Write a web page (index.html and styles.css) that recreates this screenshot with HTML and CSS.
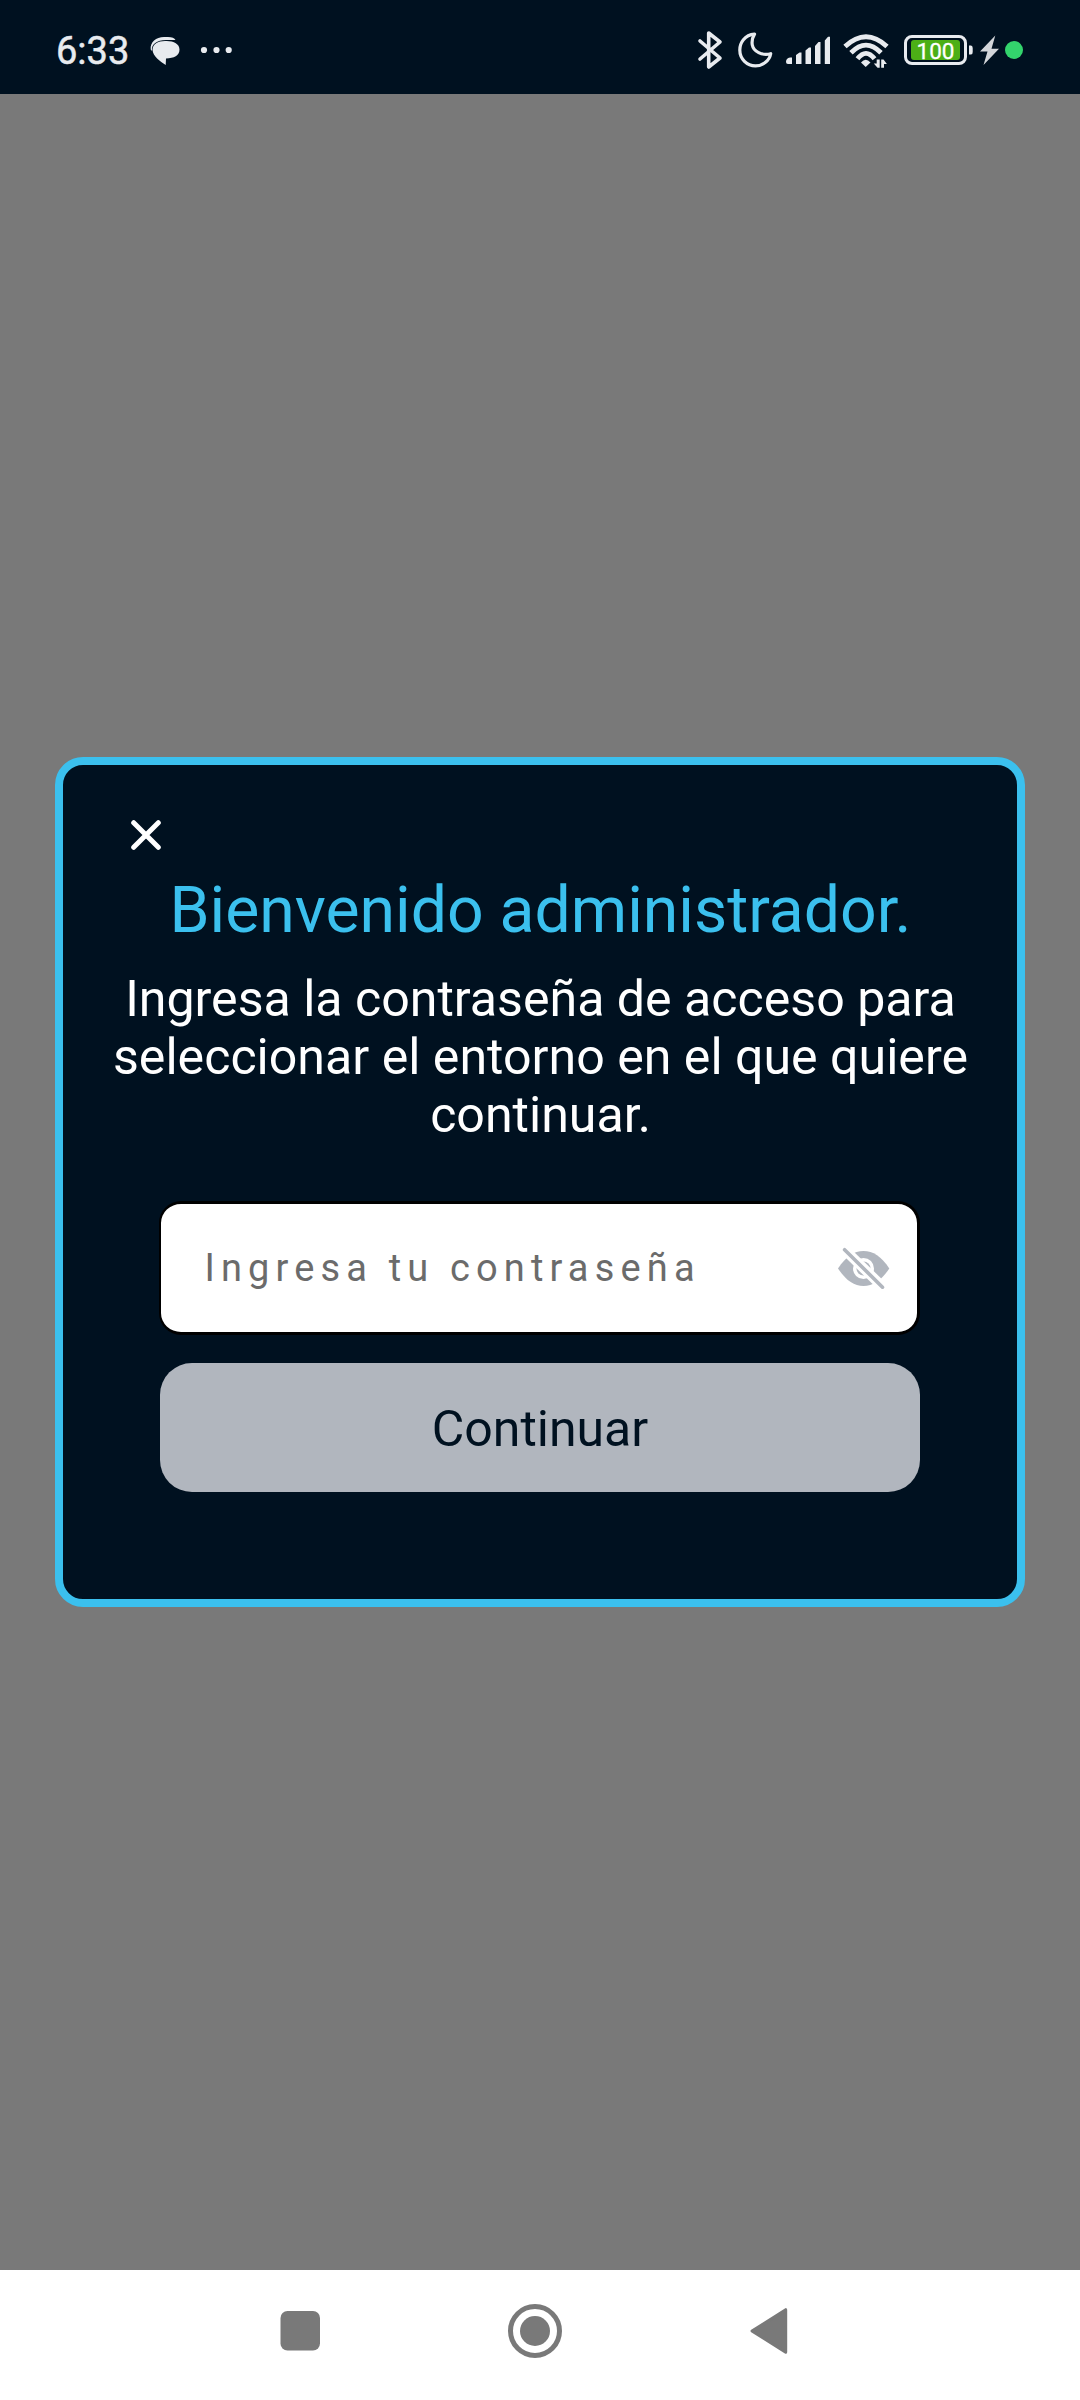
FILE: index.html
```html
<!DOCTYPE html>
<html lang="es">
<head>
<meta charset="utf-8">
<title>Acceso de administrador</title>
<link rel="stylesheet" href="styles.css">
</head>
<body>
<header class="status-bar">
  <div class="status-group">
    <span class="clock">6:33</span>
    <svg class="status-icons" viewBox="147 24 88 52" width="88" height="52">
      <path class="fill" d="M150.700 49.500 C150 42 156 37 164 37 H168 C172 37 174.500 38 175.500 40 H166 C157 40 151 44 152 51Z"/>
      <path class="fill" d="M165 41 C173 40.500 179.500 43.500 179.500 49.500 C179.500 56 174 58 166 58.500 L165.700 65 C160 61.500 153 56 152.500 50 C152.500 44 158 41 165 41Z"/>
      <circle class="fill" cx="204" cy="50" r="3.100"/><circle class="fill" cx="216.500" cy="50" r="3.100"/><circle class="fill" cx="228.700" cy="50" r="3.100"/>
    </svg>
  </div>
  <div class="status-group">
    <svg class="status-icons" viewBox="690 24 203 52" width="203" height="52">
      <path class="stroke" d="M700 41 L720 58 L708.700 67 V33 L720 42 L700 59"/>
      <path class="stroke moon" d="M754.500 34.200 C744.500 35 739.800 43 739.800 50 C739.800 59 747 65.800 755.500 65.800 C763 65.800 769.500 60.500 770.700 53.700 C762 56 753.500 51.500 752.300 45 C751.600 41 752.500 37.500 754.500 34.200Z"/>
      <path class="fill" d="M786 62 Q786 58 790 57.500 H792 V64 H788 Q786 64 786 62Z M796 64 V55 L799.500 52.500 H801.500 V64Z M805.500 64 V50.500 L809 47.500 H811 V64Z M815 64 V46 L818.500 42 H820.500 V64Z M824.800 64 V40.500 L828 36.700 H830 V64Z"/>
      <path class="stroke wifi" d="M845 46.500 Q866 27 887 46.500 M851 52.800 Q866 37.500 881 52.800 M857.500 58.800 Q866 47.800 874.500 58.800"/>
      <path class="fill" d="M865.700 67 L861 62.500 Q865.700 57 870.500 62.500Z"/>
      <path class="gap" d="M874 63 L878 60 H881 L887 62 V65 H884.800 V68.500 H878 L874 63Z"/>
      <path class="fill" d="M876.700 59.500 H879.700 V67.700 H877.500 L873.800 63.500 H876.700Z M884 67.700 H881.200 V59.500 H883.500 L886.900 64 H884Z"/>
    </svg>
    <div class="battery"><span class="level">100</span></div>
    <svg class="status-icons" viewBox="967 24 60 52" width="60" height="52">
      <path class="fill" d="M969 45.500 H971 Q972.700 45.500 972.700 48 V52 Q972.700 54.500 971 54.500 H969Z"/>
      <path class="bolt" d="M995.300 35.500 L980 51.500 H987.500 L983.500 65 L999 48.700 H991.500Z"/>
      <circle class="dot" cx="1014" cy="50" r="9"/>
    </svg>
  </div>
</header>
<main class="screen">
  <section class="dialog">
    <button class="close" aria-label="Cerrar"><svg viewBox="0 0 30 30" width="30" height="30"><path d="M2.700 2.700 L27.300 27.300 M27.300 2.700 L2.700 27.300"/></svg></button>
    <h1 class="title">Bienvenido administrador.</h1>
    <p class="message">Ingresa la contraseña de acceso para<br>seleccionar el entorno en el que quiere<br>continuar.</p>
    <div class="field">
      <span class="placeholder">Ingresa tu contraseña</span>
      <svg class="eye" viewBox="837 1246 54 44" width="54" height="44">
        <path class="eye-gray" d="M838 1268.500 C846 1256.500 854 1251 863.500 1251 C873 1251 881.500 1256.500 889.300 1268.500 C881.500 1280.500 873 1286 863.500 1286 C854 1286 846 1280.500 838 1268.500Z"/>
        <circle class="eye-white" cx="863.500" cy="1268.500" r="10.500"/>
        <circle class="eye-gray" cx="863.500" cy="1268.500" r="7"/>
        <circle class="eye-white" cx="863.500" cy="1268.500" r="4.200"/>
        <path class="slash-gap" d="M840 1245.300 L887.500 1291.500"/>
        <path class="slash" d="M844.600 1249.700 L882.500 1287.200"/>
      </svg>
    </div>
    <button class="submit">Continuar</button>
  </section>
</main>
<nav class="nav-bar">
  <svg viewBox="275 2300 520 62" width="520" height="62">
    <rect x="280.500" y="2311" width="39.500" height="39.500" rx="7"/>
    <circle class="ring" cx="535" cy="2331" r="24.500"/>
    <circle cx="535" cy="2331" r="15"/>
    <path class="back" d="M785.700 2309.700 V2352.300 L752 2331Z"/>
  </svg>
</nav>
</body>
</html>
```
FILE: styles.css
```css
* { box-sizing: border-box; }

body {
  margin: 0;
  height: 2400px;
  display: flex;
  flex-direction: column;
  background: #797979;
  font-family: Roboto, sans-serif;
}

button {
  border: 0;
  padding: 0;
  font-family: inherit;
}

svg { display: block; flex: none; }

/* Status bar */
.status-bar {
  height: 94px;
  padding: 24px 53px 18px 56px;
  display: flex;
  justify-content: space-between;
  background: #001120;
}

.status-group {
  display: flex;
  height: 52px;
}

.clock {
  width: 91px;
  color: #e8ebef;
  font-size: 38px;
  line-height: 54px;
  -webkit-text-stroke: 0.500px #e8ebef;
}

.fill { fill: #e8ebef; }

.stroke {
  fill: none;
  stroke: #e8ebef;
  stroke-width: 3.600;
  stroke-linecap: round;
  stroke-linejoin: round;
}

.moon { stroke-width: 3.200; }
.wifi { stroke-width: 4.800; stroke-linecap: butt; }
.gap { fill: #001120; stroke: #001120; stroke-width: 2; }
.bolt { fill: #d3d6da; }
.dot { fill: #33d46c; }

.battery {
  width: 63px;
  height: 30px;
  margin: 11px 0 0 11px;
  padding: 2px 4px;
  border: 3px solid #e8ebef;
  border-radius: 8px;
}

.level {
  display: block;
  height: 20px;
  border-radius: 3px;
  background: #4caf16;
  color: #fff;
  font-size: 22.500px;
  line-height: 22px;
  text-align: center;
  -webkit-text-stroke: 0.300px #fff;
}

/* Dialog */
.screen {
  flex: 1;
  padding: 663px 55px 0;
}

.dialog {
  height: 850px;
  padding: 55px 40px 0;
  display: flex;
  flex-direction: column;
  border: 8px solid #3bc0ee;
  border-radius: 28px;
  background: #001120;
  text-align: center;
}

.close {
  width: 30px;
  height: 30px;
  margin-left: 27.500px;
  background: none;
}

.close path {
  stroke: #fff;
  stroke-width: 5;
  stroke-linecap: round;
}

.title {
  margin: 22px 0 0;
  padding-left: 1px;
  color: #3bc0ee;
  font-size: 64.3px;
  font-weight: 400;
  line-height: 76px;
}

.message {
  margin: 22px 0 0;
  padding-left: 1px;
  color: #fff;
  font-size: 50.1px;
  line-height: 58px;
}

.field {
  width: 761px;
  height: 134px;
  margin: 57px 0 0 56px;
  padding: 0 26px 0 43.500px;
  display: flex;
  align-items: center;
  justify-content: space-between;
  border: 3px solid #000;
  border-left-width: 2px;
  border-radius: 22px;
  background: #fff;
}

.placeholder {
  color: #6b6b6b;
  font-size: 38px;
  letter-spacing: 6.150px;
}

.eye-gray { fill: #b1b6be; }
.eye-white { fill: #fff; }
.slash-gap { stroke: #fff; stroke-width: 10; }
.slash { stroke: #b1b6be; stroke-width: 3.600; stroke-linecap: round; }

.submit {
  width: 760px;
  height: 129px;
  margin: 28px 0 0 57px;
  padding-top: 2px;
  border-radius: 32px;
  background: #b1b6be;
  color: #001120;
  font-size: 50px;
}

/* System navigation */
.nav-bar {
  height: 130px;
  padding: 30px 0 0 275px;
  background: #fff;
}

.nav-bar svg { fill: #797979; }
.nav-bar .ring { fill: none; stroke: #797979; stroke-width: 5; }
.back { stroke: #797979; stroke-width: 3; stroke-linejoin: round; }
```
